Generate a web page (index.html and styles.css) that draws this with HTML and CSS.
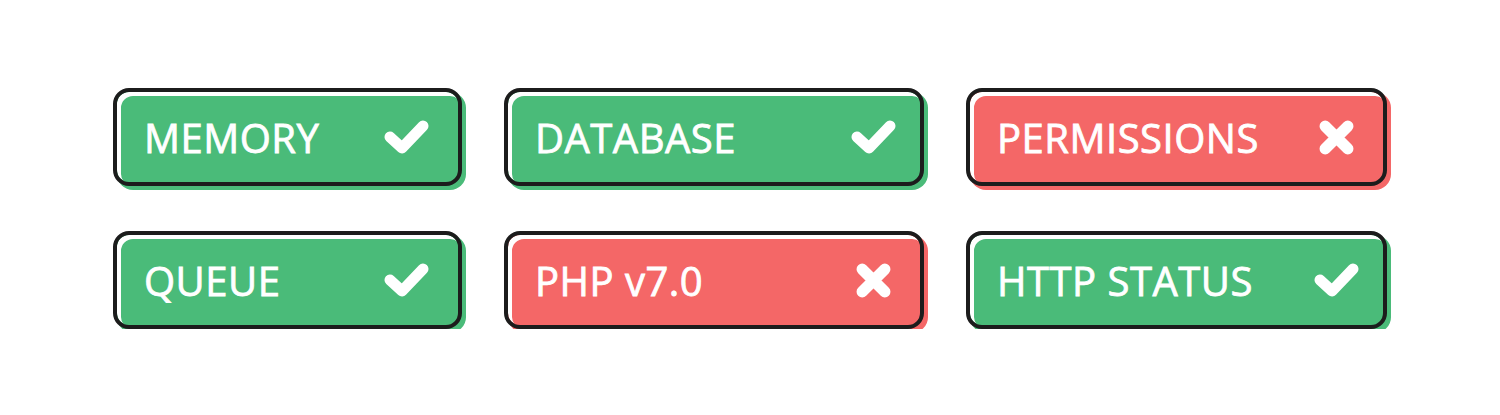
FILE: index.html
```html
<!DOCTYPE html>
<html lang="en">
<head>
<meta charset="utf-8">
<title>Status checks</title>
<link rel="stylesheet" href="styles.css">
</head>
<body>
<main class="board">
  <div class="badge ok col-a"><span class="label">MEMORY</span>
    <svg class="icon check" viewBox="0 0 45 34"><path d="M6 17 L18 28 L39 6"/></svg></div>
  <div class="badge ok"><span class="label">DATABASE</span>
    <svg class="icon check" viewBox="0 0 45 34"><path d="M6 17 L18 28 L39 6"/></svg></div>
  <div class="badge fail"><span class="label">PERMISSIONS</span>
    <svg class="icon cross" viewBox="0 0 36 36"><path d="M7 7 L29 29 M29 7 L7 29"/></svg></div>
  <div class="badge ok col-a"><span class="label">QUEUE</span>
    <svg class="icon check" viewBox="0 0 45 34"><path d="M6 17 L18 28 L39 6"/></svg></div>
  <div class="badge fail"><span class="label">PHP v7.0</span>
    <svg class="icon cross" viewBox="0 0 36 36"><path d="M7 7 L29 29 M29 7 L7 29"/></svg></div>
  <div class="badge ok"><span class="label">HTTP STATUS</span>
    <svg class="icon check" viewBox="0 0 45 34"><path d="M6 17 L18 28 L39 6"/></svg></div>
</main>
</body>
</html>
```

FILE: styles.css
```css
* { box-sizing: border-box; }
html, body { margin: 0; padding: 0; background: #ffffff; }
body { font-family: "Open Sans", "Liberation Sans", sans-serif; }

.board {
  display: grid;
  grid-template-columns: 349px 420px 421px;
  grid-auto-rows: 98px;
  column-gap: 42px;
  row-gap: 45px;
  justify-content: center;
  padding-top: 88px;
}

.badge {
  display: flex;
  align-items: center;
  justify-content: space-between;
  border: 4px solid #1c1c1c;
  border-radius: 16px;
  padding: 0 24px 0 27px;
  color: #ffffff;
}
.badge.col-a { padding-right: 29px; }
.badge.ok {
  background: #4abb79;
  box-shadow: inset 4px 4px 0 #ffffff, 4px 4px 0 #4abb79;
}
.badge.fail {
  background: #f46767;
  box-shadow: inset 4px 4px 0 #ffffff, 4px 4px 0 #f46767;
}

.label {
  font-size: 40px;
  font-weight: 400;
  letter-spacing: 0.5px;
  -webkit-text-stroke: 0.8px #ffffff;
  line-height: 1;
  padding-top: 1px;
}

.icon {
  fill: none;
  stroke: #ffffff;
  stroke-linecap: round;
  stroke-linejoin: round;
}
.icon.check { width: 45px; height: 34px; stroke-width: 11; }
.icon.cross { width: 37px; height: 37px; stroke-width: 11; margin-right: 4px; }
```
